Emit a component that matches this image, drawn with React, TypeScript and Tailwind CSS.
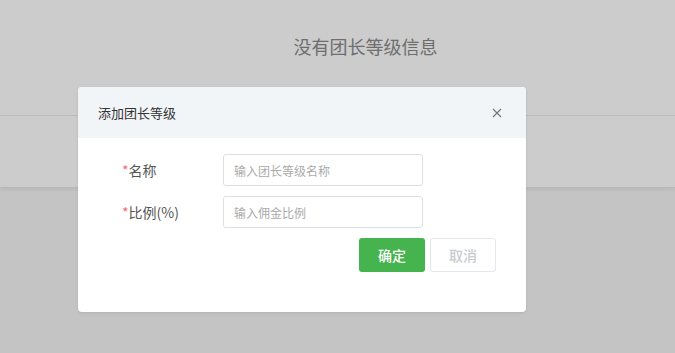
import React from 'react';

export default function App() {
  return (
    <div
      className="relative w-[675px] h-[353px] overflow-hidden bg-[#f5f5f5]"
      style={{ fontFamily: '"Noto Sans CJK SC", "Noto Sans", sans-serif' }}
    >
      {/* Page behind the mask */}
      <div className="bg-white shadow-[0_2px_4px_rgba(0,0,0,0.08)]">
        <div className="h-[116px] border-b border-[#ebebeb] flex items-start justify-center pl-[56px] pt-[34px]">
          <h1 className="text-[18px] leading-[24px] text-[#8a8a8a]">没有团长等级信息</h1>
        </div>
        <div className="h-[71px]" />
      </div>

      {/* Mask */}
      <div className="absolute inset-0 bg-black/20" />

      {/* Dialog */}
      <div className="absolute left-[78px] top-[87px] w-[448px] h-[225px] bg-white rounded-[4px] overflow-hidden shadow-[0_1px_3px_rgba(0,0,0,0.1)]">
        <div className="h-[51px] bg-[#f2f5f8] flex items-center justify-between pl-[20px] pr-[24px]">
          <span className="text-[13px] text-[#333]">添加团长等级</span>
          <svg className="w-[10px] h-[10px] text-[#777]" viewBox="0 0 10 10" fill="none" stroke="currentColor" strokeWidth={1.2}>
            <path d="M1 1l8 8M9 1l-8 8" />
          </svg>
        </div>

        <div className="pt-[16px] pl-[44px] pr-[30px]">
          <div className="flex flex-col gap-[10px]">
            <div className="flex items-center h-[32px]">
              <label className="w-[101px] text-[14px] text-[#555]">
                <span className="text-[#f56c6c]">*</span>名称
              </label>
              <input
                className="w-[200px] h-[32px] border border-[#dcdfe6] rounded-[3px] px-[10px] text-[12px] placeholder:text-[#aaa] outline-none"
                placeholder="输入团长等级名称"
              />
            </div>
            <div className="flex items-center h-[32px]">
              <label className="w-[101px] text-[14px] text-[#555]">
                <span className="text-[#f56c6c]">*</span>比例(%)
              </label>
              <input
                className="w-[200px] h-[32px] border border-[#dcdfe6] rounded-[3px] px-[10px] text-[12px] placeholder:text-[#aaa] outline-none"
                placeholder="输入佣金比例"
              />
            </div>
          </div>

          <div className="flex justify-end gap-[5px] mt-[10px]">
            <button className="w-[66px] h-[34px] rounded-[3px] bg-[#46b44e] text-white text-[14px] font-medium">
              确定
            </button>
            <button className="w-[66px] h-[34px] rounded-[3px] border border-[#e4e7ed] bg-white text-[#c8cbd0] text-[14px] font-medium">
              取消
            </button>
          </div>
        </div>
      </div>
    </div>
  );
}
